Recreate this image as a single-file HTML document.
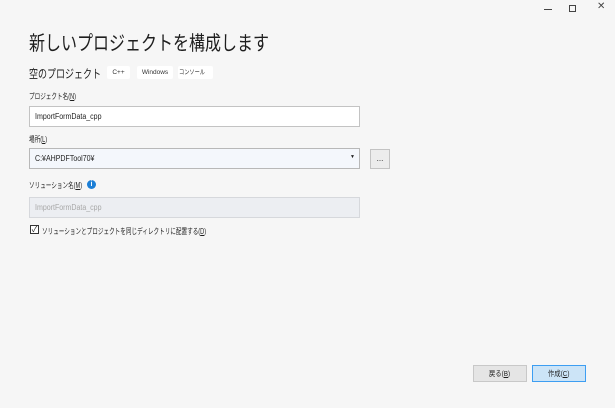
<!DOCTYPE html>
<html><head><meta charset="utf-8"><style>
*{margin:0;padding:0;box-sizing:border-box}
body{width:615px;height:408px;background:#f6f6f6;font-family:"Liberation Sans","Noto Sans CJK JP",sans-serif;color:#1e1e1e;position:relative;overflow:hidden}
.a{position:absolute;white-space:nowrap}
.s{display:inline-block;transform-origin:left center}
.lbl{font-size:8px;color:#1e1e1e}
.lbl .s{transform:scaleX(.7)}
.inp{position:absolute;left:29px;width:331px;height:21px;background:#fff;border:1px solid #c3c3c3;font-size:8px;padding:5px 0 0 5px}
.inp .s{transform:scaleX(.88)}
.chip{position:absolute;top:66px;height:13px;background:#fff;border-radius:2px;font-size:6.5px;text-align:center;line-height:13px;color:#333}
.btn{position:absolute;top:365px;width:54px;height:17px;font-size:7.5px;text-align:center;line-height:15px}
</style></head><body>
<div class="a" style="left:544px;top:9px;width:8px;height:1px;background:#444"></div>
<div class="a" style="left:569px;top:5px;width:7px;height:7px;border:1px solid #444"></div>
<div class="a" style="left:597px;top:1px;font-size:10px;color:#444">✕</div>
<div class="a" style="left:29px;top:27px;font-size:20px;"><span class="s" style="transform:scaleX(.8)">新しいプロジェクトを構成します</span></div>
<div class="a" style="left:29px;top:65px;font-size:12px;"><span class="s" style="transform:scaleX(.75)">空のプロジェクト</span></div>
<div class="chip" style="left:107px;width:23px">C++</div>
<div class="chip" style="left:137px;width:36px">Windows</div>
<div class="chip" style="left:178px;width:35px"><span class="s" style="transform:scaleX(.8)">コンソール</span></div>
<div class="a lbl" style="left:29px;top:91px"><span class="s">プロジェクト名(<u>N</u>)</span></div>
<div class="inp" style="top:106px"><span class="s">ImportFormData_cpp</span></div>
<div class="a lbl" style="left:29px;top:134px"><span class="s">場所(<u>L</u>)</span></div>
<div class="inp" style="top:148px;background:#f4f7fc;border-color:#b8b8b8"><span class="s">C:¥AHPDFTool70¥</span><span style="position:absolute;right:4px;top:5px;font-size:5px">▼</span></div>
<div class="a" style="left:370px;top:149px;width:20px;height:20px;background:#ececec;border:1px solid #c3c3c3;font-size:8px;text-align:center;line-height:18px">...</div>
<div class="a lbl" style="left:29px;top:180px"><span class="s">ソリューション名(<u>M</u>)</span></div>
<div class="a" style="left:87px;top:180px;width:9px;height:9px;border-radius:50%;background:#1c7fd6;color:#fff;font-size:7px;font-weight:bold;text-align:center;line-height:9px">i</div>
<div class="inp" style="top:197px;background:#eceef2;border-color:#d6d8dc;color:#a8a8a8"><span class="s">ImportFormData_cpp</span></div>
<div class="a" style="left:30px;top:225px;width:9px;height:9px;border:1px solid #333;background:#fff;font-size:8px;line-height:7px;text-align:center">✓</div>
<div class="a lbl" style="left:42px;top:226px"><span class="s">ソリューションとプロジェクトを同じディレクトリに配置する(<u>D</u>)</span></div>
<div class="btn" style="left:473px;background:#e5e5e5;border:1px solid #c8c8c8"><span class="s" style="transform:scaleX(.85);transform-origin:center">戻る(<u>B</u>)</span></div>
<div class="btn" style="left:532px;background:#cce4f7;border:1px solid #3d9ef2"><span class="s" style="transform:scaleX(.85);transform-origin:center">作成(<u>C</u>)</span></div>
</body></html>
